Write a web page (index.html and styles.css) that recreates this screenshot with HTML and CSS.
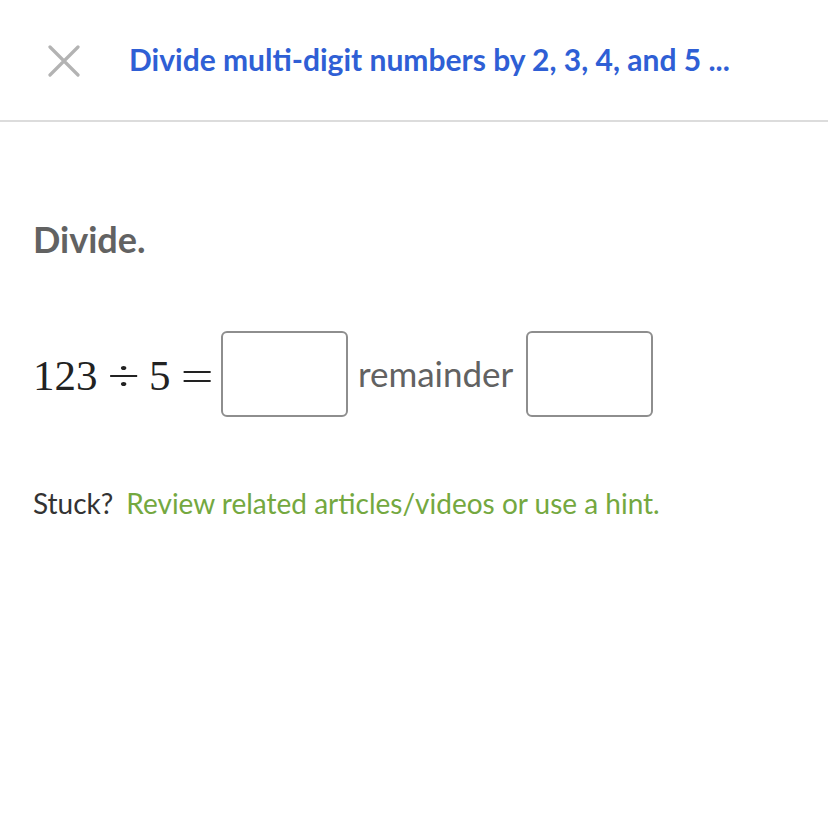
FILE: index.html
```html
<!DOCTYPE html>
<html>
<head>
<meta charset="utf-8">
<link rel="stylesheet" href="styles.css">
</head>
<body>
<header class="topbar">
  <svg class="close" width="32" height="32" viewBox="0 0 32 32"><path d="M2 2 L30 30 M30 2 L2 30" stroke="#b3b3b3" stroke-width="3.2" stroke-linecap="round" fill="none"/></svg>
  <div class="title">Divide multi-digit numbers by 2, 3, 4, and 5 ...</div>
</header>
<main class="content">
  <h1 class="prompt">Divide.</h1>
  <div class="equation">
    <span class="math">123<span class="op">÷</span>5<span class="op">=</span></span>
    <span class="box"></span>
    <span class="word">remainder</span>
    <span class="box"></span>
  </div>
  <p class="stuck">Stuck?<span class="hint">Review related articles/videos or use a hint.</span></p>
</main>
</body>
</html>
```
FILE: styles.css
```css
html, body {
  margin: 0;
  padding: 0;
  background: #fff;
}
body {
  font-family: Lato, "Open Sans", sans-serif;
  width: 828px;
  height: 828px;
  overflow: hidden;
}
.topbar {
  height: 122px;
  border-bottom: 2px solid #dcdcdc;
  display: flex;
  align-items: center;
  padding-left: 48px;
  box-sizing: border-box;
}
.close {
  display: block;
  margin-top: 1px;
}
.title {
  margin-left: 49px;
  font-weight: 700;
  font-size: 30px;
  color: #2f5fd5;
  padding-bottom: 2px;
}
.content {
  padding-left: 33px;
}
.prompt {
  margin: 97px 0 0 0;
  font-size: 36px;
  font-weight: 700;
  color: #626262;
  line-height: 40px;
}
.equation {
  margin-top: 72px;
  display: flex;
  align-items: center;
  height: 86px;
}
.math {
  font-family: "Liberation Serif", "DejaVu Serif", serif;
  font-size: 43px;
  color: #222;
  white-space: pre;
  margin-right: -2px;
  margin-top: 2px;
  display: flex;
  align-items: baseline;
}
.op {
  display: inline-block;
  padding: 0 14px;
  transform: scaleX(1.35);
}
.box {
  width: 127px;
  height: 86px;
  box-sizing: border-box;
  border: 2px solid #8e8e8e;
  border-radius: 6px;
}
.word {
  font-size: 35px;
  color: #626262;
  margin: 0 13px 0 10px;
  padding-bottom: 2px;
}
.stuck {
  margin: 70px 0 0 0;
  font-size: 28px;
  color: #333;
  line-height: 32px;
}
.hint {
  color: #74a840;
  margin-left: 13px;
}
```
